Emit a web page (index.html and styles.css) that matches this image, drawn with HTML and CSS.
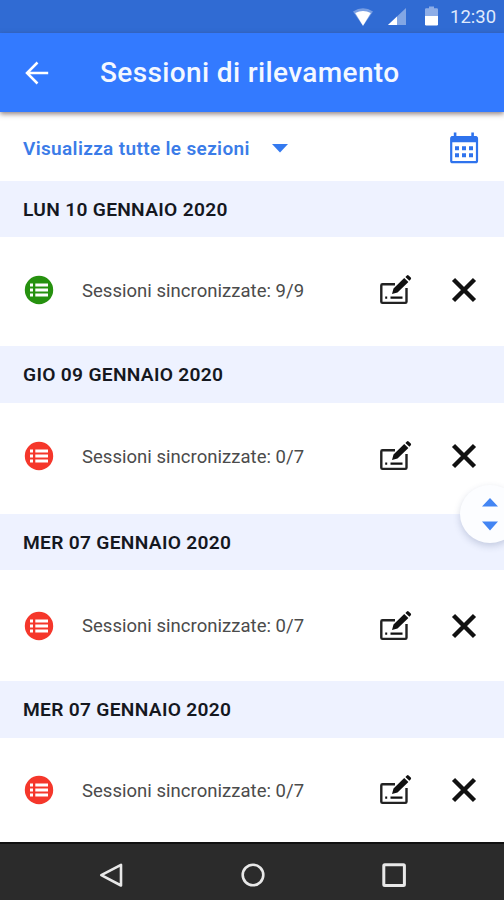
FILE: index.html
```html
<!DOCTYPE html>
<html lang="it">
<head>
<meta charset="utf-8">
<title>Sessioni di rilevamento</title>
<link rel="stylesheet" href="styles.css">
</head>
<body>
<svg class="symbols" aria-hidden="true">
  <symbol id="list" viewBox="0 0 30 30">
    <circle cx="15" cy="15" r="14.2" fill="currentColor"/>
    <path d="M6 10h3M6 15h3M6 20h3M11.3 10H24M11.3 15H24M11.3 20H24" stroke="#fff" stroke-width="3.2"/>
  </symbol>
  <symbol id="edit" viewBox="0 0 34 32">
    <path d="M16 10.300H3.500q-1.200 0-1.200 1.200v16.200q0 1.200 1.200 1.200h22.800q1.200 0 1.200-1.200V14" fill="none" stroke="#222" stroke-width="2.400"/>
    <path d="M6.200 23.700h2M11.500 23.700h12" stroke="#111" stroke-width="2.200"/>
    <path d="M13 20l1.500-5.500L25.200 3.900l4.200 4.200L18.500 18.500zM26.400 2.900l1.500-1.500q.8-.7 1.700 0l2.200 2.200q.7.900 0 1.700l-1.400 1.500z" fill="#111"/>
  </symbol>
  <symbol id="cross" viewBox="0 0 28 28">
    <path d="M3.500 3.500l21 21M24.500 3.500l-21 21" stroke="#111" stroke-width="4.400"/>
  </symbol>
</svg>
<div class="screen">
  <div class="status">
    <svg class="wifi" viewBox="0 0 20 18"><path d="M0 3.500Q10-3 20 3.500L10 18z" fill="#fff" opacity=".35"/><path d="M2.200 5Q10 .8 17.800 5L10 17.800z" fill="#fff"/></svg>
    <svg class="signal" viewBox="0 0 18 17"><path d="M0 17L18 0v17z" fill="#fff" opacity=".4"/><path d="M0 17L9 8.500V17z" fill="#fff"/></svg>
    <svg class="battery" viewBox="0 0 13 20"><path d="M0 3.500Q0 2.300 1.200 2.300H4V.5h5v1.800h2.800Q13 2.300 13 3.500V10H0z" fill="#fff" opacity=".45"/><path d="M0 10h13v8.300q0 1.200-1.200 1.200H1.200Q0 19.500 0 18.300z" fill="#fff"/></svg>
    <span class="clock">12:30</span>
  </div>
  <header class="appbar">
    <svg class="back" viewBox="0 0 24 24"><path d="M12.500 1.500L2 12l10.500 10.500M2.500 12H23.200" fill="none" stroke="#fff" stroke-width="2.500"/></svg>
    <h1 class="title">Sessioni di rilevamento</h1>
  </header>
  <div class="filter">
    <span class="filter-label">Visualizza tutte le sezioni</span>
    <svg class="caret" viewBox="0 0 16 9"><path d="M0 0h16L8 8.500z" fill="#347af0"/></svg>
    <svg class="calendar" viewBox="0 0 30 32">
      <rect x="2.200" y="5.200" width="25.800" height="25" rx="1.500" fill="none" stroke="#2f73ed" stroke-width="2.200"/>
      <path d="M2 4.500h26v5.700H2zM4.800 .5h2.600v5H4.800zM22.300 .5h2.600v5h-2.600z" fill="#2f73ed"/>
      <path d="M6 16.300h4M13 16.300h4M20 16.300h4M6 23.300h4M13 23.300h4M20 23.300h4" stroke="#2f73ed" stroke-width="4"/>
    </svg>
  </div>
  <main>
    <section class="day day-a">
      <h2 class="date">LUN 10 GENNAIO 2020</h2>
      <div class="row">
        <svg class="badge synced"><use href="#list"/></svg>
        <span class="label">Sessioni sincronizzate: 9/9</span>
        <svg class="edit"><use href="#edit"/></svg>
        <svg class="cross"><use href="#cross"/></svg>
      </div>
    </section>
    <section class="day day-b">
      <h2 class="date">GIO 09 GENNAIO 2020</h2>
      <div class="row">
        <svg class="badge"><use href="#list"/></svg>
        <span class="label">Sessioni sincronizzate: 0/7</span>
        <svg class="edit"><use href="#edit"/></svg>
        <svg class="cross"><use href="#cross"/></svg>
      </div>
    </section>
    <section class="day day-c">
      <h2 class="date">MER 07 GENNAIO 2020</h2>
      <div class="row">
        <svg class="badge"><use href="#list"/></svg>
        <span class="label">Sessioni sincronizzate: 0/7</span>
        <svg class="edit"><use href="#edit"/></svg>
        <svg class="cross"><use href="#cross"/></svg>
      </div>
    </section>
    <section class="day day-d">
      <h2 class="date">MER 07 GENNAIO 2020</h2>
      <div class="row">
        <svg class="badge"><use href="#list"/></svg>
        <span class="label">Sessioni sincronizzate: 0/7</span>
        <svg class="edit"><use href="#edit"/></svg>
        <svg class="cross"><use href="#cross"/></svg>
      </div>
    </section>
  </main>
  <div class="scroller">
    <svg viewBox="0 0 16 34"><path d="M0 8.500L8 0l8 8.500zM0 23.500h16L8 32.500z" fill="#4385f3"/></svg>
  </div>
  <nav class="navbar">
    <svg viewBox="0 0 26 26"><path d="M23 2.800v20.700L3.300 13.200z" fill="none" stroke="#e8e8e8" stroke-width="2.600" stroke-linejoin="round"/></svg>
    <svg viewBox="0 0 26 26"><circle cx="13" cy="13" r="10.300" fill="none" stroke="#e8e8e8" stroke-width="2.600"/></svg>
    <svg viewBox="0 0 26 26"><rect x="2.800" y="2.800" width="20.600" height="20.600" rx="1" fill="none" stroke="#e8e8e8" stroke-width="3"/></svg>
  </nav>
</div>
</body>
</html>
```
FILE: styles.css
```css
* { box-sizing: border-box; }
body { margin: 0; font-family: Roboto, "Liberation Sans", sans-serif; background: #fff; }
svg { display: block; flex: none; }
.symbols { position: absolute; width: 0; height: 0; }
.screen { position: relative; width: 504px; height: 900px; overflow: hidden; display: flex; flex-direction: column; }
.status { height: 33px; flex: none; background: #306bd3; display: flex; align-items: center; justify-content: flex-end; padding-right: 8px; }
.wifi { width: 20px; height: 18px; margin-right: 15px; }
.signal { width: 18px; height: 17px; margin-right: 19px; }
.battery { width: 13px; height: 20px; margin: 0 12px 2px 0; }
.clock { width: 46px; font-size: 18.500px; line-height: 34px; color: #dfe9fc; white-space: nowrap; }
.appbar { height: 79px; flex: none; background: #337aff; display: flex; align-items: center; padding-left: 25px; box-shadow: 0 2px 5px rgba(70, 45, 45, .6); z-index: 1; }
.back { width: 24px; height: 24px; margin-right: 51px; }
.title { margin: 0; font-size: 28px; letter-spacing: .37px; font-weight: 500; line-height: 40px; color: #f4f8ff; white-space: nowrap; }
.filter { height: 69px; flex: none; display: flex; align-items: center; padding: 3px 25px 0 23px; }
.filter-label { width: 249px; font-size: 19px; letter-spacing: .35px; font-weight: 600; color: #3b7ce8; white-space: nowrap; }
.caret { width: 16px; height: 9px; }
.calendar { width: 30px; height: 32px; margin-left: auto; }
.date { margin: 0; height: 56px; background: #eef2ff; padding-left: 23px; font-size: 19.200px; letter-spacing: .3px; font-weight: 600; line-height: 57px; color: #15181f; white-space: nowrap; }
.row { display: grid; grid-template-columns: 58px 297px 71px 28px; align-items: center; padding-left: 24px; height: 109px; }
.badge { width: 30px; height: 30px; color: #f5372b; }
.synced { color: #26910f; }
.label { padding-top: 1px; font-size: 18.500px; letter-spacing: .03px; color: #4b4b4b; white-space: nowrap; }
.edit { width: 34px; height: 32px; }
.cross { width: 28px; height: 28px; }
.day-a .row { padding-bottom: 3px; }
.day-b .date, .day-d .date { height: 57px; line-height: 58px; }
.day-b .row { height: 111px; padding-bottom: 5px; }
.day-c .row { height: 111px; }
.day-d .row { height: 104px; }
.scroller { position: absolute; left: 460px; top: 485px; width: 60px; height: 58px; border-radius: 50%; background: #fcfdff; box-shadow: 0 3px 7px rgba(50, 70, 120, .22); padding: 13px 0 0 22px; }
.scroller svg { width: 16px; height: 34px; }
.navbar { height: 58px; flex: none; background: #2b2b2b; border-top: 2px solid #111; display: flex; align-items: center; padding: 6px 0 0 98px; gap: 115.500px; }
.navbar svg { width: 26px; height: 26px; }
```
